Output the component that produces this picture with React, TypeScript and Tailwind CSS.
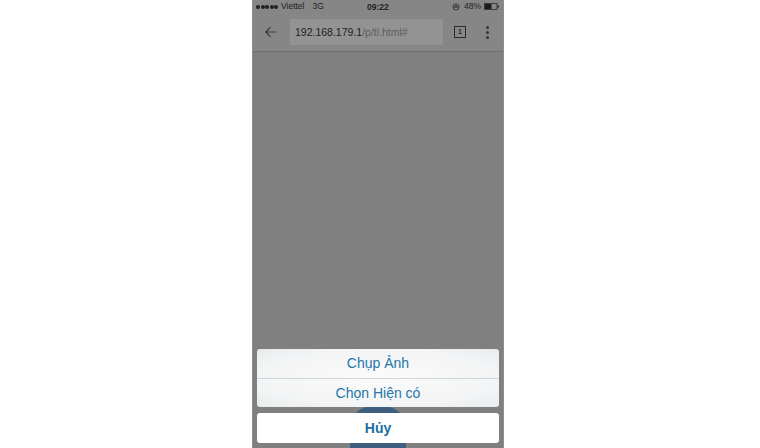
import React from 'react';

const Battery: React.FC = () => (
  <svg width="16" height="7" viewBox="0 0 16 7" className="ml-[3px]">
    <rect x="0.5" y="0.5" width="12.5" height="6" fill="none" stroke="#2a2a2a" strokeWidth="0.8" />
    <rect x="1" y="1" width="6.5" height="5" fill="#1c1c1c" />
    <rect x="13.5" y="2.2" width="1.3" height="2.6" fill="#2a2a2a" />
  </svg>
);

const SheetButton: React.FC<{ label: string; className?: string }> = ({ label, className }) => (
  <div className={`flex items-center justify-center text-[14px] ${className ?? ''}`}>{label}</div>
);

export default function App() {
  return (
    <div className="w-[760px] h-[448px] bg-white flex justify-center overflow-hidden font-['Liberation_Sans',sans-serif]">
      <div className="w-[252px] ml-[-4px] h-full flex flex-col bg-[#808080] border-x border-[#8d8d8d]">
        <div className="h-[13px] flex items-center justify-between px-[3px] text-[8.5px] text-[#222] bg-[#868686] relative">
          <div className="flex items-center">
            <div className="flex gap-[0.5px]">
              <span className="w-[4px] h-[4px] rounded-full bg-[#222]" />
              <span className="w-[4px] h-[4px] rounded-full bg-[#222]" />
              <span className="w-[4px] h-[4px] rounded-full bg-[#222]" />
              <span className="w-[4px] h-[4px] rounded-full bg-[#222]" />
              <span className="w-[4px] h-[4px] rounded-full bg-[#222]" />
            </div>
            <span className="ml-[3px]">Viettel</span>
            <span className="ml-[8px]">3G</span>
          </div>
          <span className="absolute left-[114px] top-[1px] font-bold text-[8.5px]">09:22</span>
          <div className="flex items-center">
            <svg width="8" height="8" viewBox="0 0 8 8" className="mr-[4px]">
              <circle cx="4" cy="4" r="3" fill="none" stroke="#2a2a2a" strokeWidth="0.9" />
              <path d="M1.5 4.5 L4 2.2 L6.5 4.5 Z" fill="#2a2a2a" />
            </svg>
            <span>48%</span>
            <Battery />
          </div>
        </div>
        <div className="h-[39px] flex items-center bg-[#868686] border-b border-[#6f6f6f]">
          <svg width="14" height="14" viewBox="0 0 14 14" className="ml-[11px]">
            <path d="M12.5 7 H1.8 M6.5 2.2 L1.8 7 L6.5 11.8" fill="none" stroke="#3a3a3a" strokeWidth="1.2" />
          </svg>
          <div className="ml-[12px] w-[153px] h-[26px] bg-[#939393] rounded-[1px] flex items-center pl-[5px] pt-[2px] text-[10.5px]">
            <span className="text-[#222]">192.168.179.1</span>
            <span className="text-[#5c5c5c]">/p/tl.html#</span>
          </div>
          <div className="ml-[11px] w-[12px] h-[12px] border border-[#2a2a2a] flex items-center justify-center text-[7px] text-[#2a2a2a] font-bold">1</div>
          <div className="ml-[20px] flex flex-col gap-[2px]">
            <span className="w-[3px] h-[3px] rounded-full bg-[#333]" />
            <span className="w-[3px] h-[3px] rounded-full bg-[#333]" />
            <span className="w-[3px] h-[3px] rounded-full bg-[#333]" />
          </div>
        </div>
        <div className="flex-1 min-h-0 bg-[#808080] relative flex flex-col justify-end px-[4px] pb-[5px]">
          <div className="absolute left-[97px] bottom-0 w-[56px] h-[42px] rounded-t-[22px] bg-[#3f5f7f]" />
          <div className="relative rounded-[3px] overflow-hidden bg-[radial-gradient(ellipse_at_center,#fbfbfb_0%,#f3f4f5_70%,#e8ebed_100%)] mb-[6px]">
            <SheetButton label="Chụp Ảnh" className="h-[30px] border-b border-[#cfd6da] text-[#1f76a8]" />
            <SheetButton label="Chọn Hiện có" className="h-[28px] text-[#1f76a8] pt-[1px]" />
          </div>
          <SheetButton label="Hủy" className="relative h-[30px] rounded-[3px] bg-white font-bold text-[#1b6ea3]" />
        </div>
      </div>
    </div>
  );
}
